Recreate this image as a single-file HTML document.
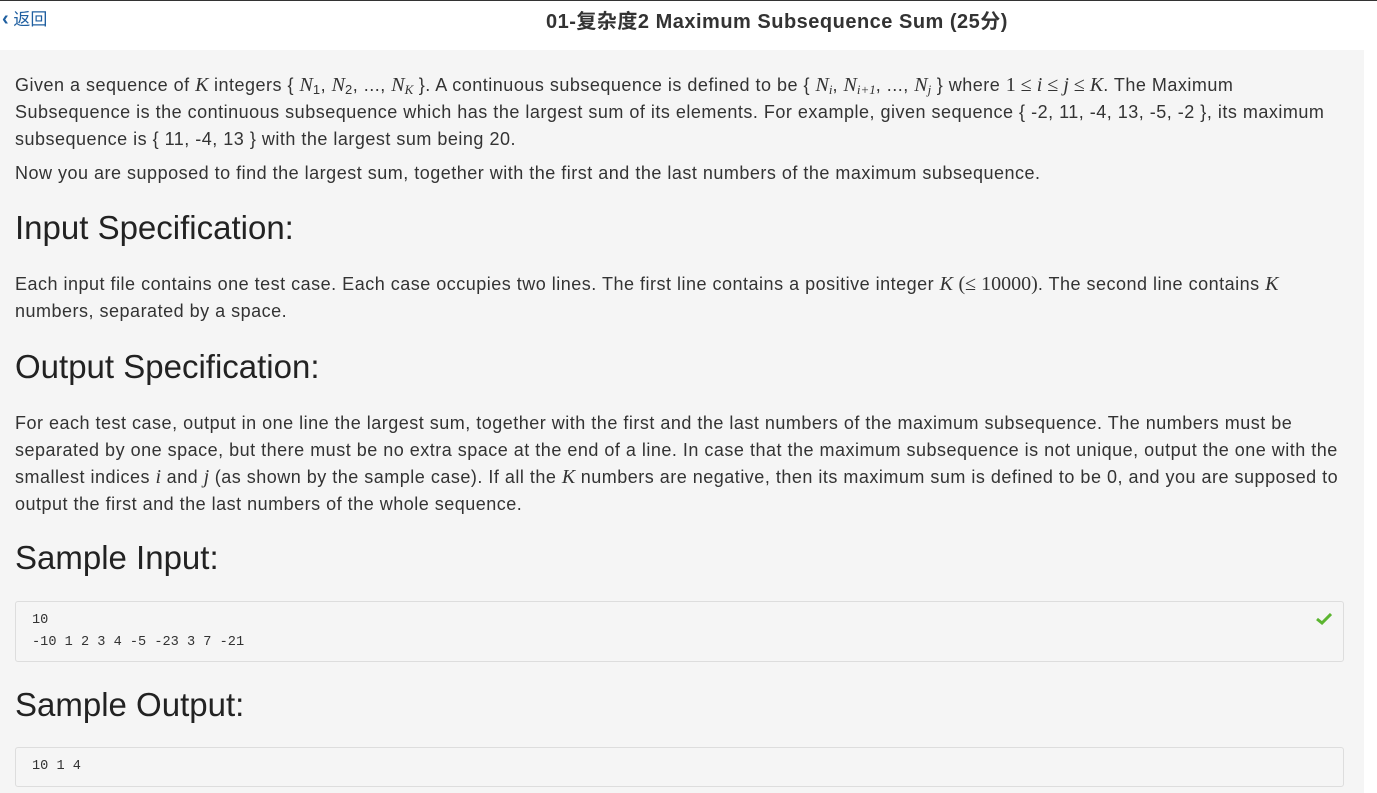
<!DOCTYPE html>
<html><head><meta charset="utf-8"><style>
html,body{margin:0;padding:0;background:#fff;width:1377px;height:793px;overflow:hidden;}
body{font-family:"Liberation Sans","Noto Sans CJK SC",sans-serif;color:#333;}
.topline{position:absolute;left:0;top:0;width:1377px;height:1px;background:#333;}
.back{position:absolute;left:2px;top:5px;font-size:17px;color:#1f5fa0;}
.back b{font-size:20px;}
.title{position:absolute;left:546px;top:5px;white-space:nowrap;font-size:20px;font-weight:bold;color:#333;letter-spacing:0.5px;}
.panel{position:absolute;left:0;top:50px;width:1364px;height:743px;background:#f5f5f5;}
.c{position:absolute;left:15px;width:1335px;font-size:18px;letter-spacing:0.5px;line-height:27px;color:#333;}
.c p{margin:0;}
.m{font-family:"Liberation Serif",serif;font-style:italic;font-size:20px;letter-spacing:0;}
.n{font-family:"Liberation Serif",serif;font-size:20px;letter-spacing:0;}
sub{font-size:13px;line-height:0;vertical-align:-3px;}
h2{position:absolute;left:15px;margin:0;font-weight:normal;font-size:33px;color:#222;}
.pre{position:absolute;left:15px;width:1329px;border:1px solid #ddd;border-radius:3px;background:#f5f5f5;font-family:"Liberation Mono","DejaVu Sans Mono",monospace;font-size:13.6px;line-height:22px;color:#333;box-sizing:border-box;padding:8px 16px;}
</style></head><body>
<div class="topline"></div>
<div class="back"><b>‹</b> 返回</div>
<div class="title">01-复杂度2 Maximum Subsequence Sum (25分)</div>
<div class="panel"></div>
<div class="c" style="top:72px">
<p>Given a sequence of <span class="m">K</span> integers { <span class="m">N</span><sub>1</sub>, <span class="m">N</span><sub>2</sub>, ..., <span class="m">N<sub>K</sub></span> }. A continuous subsequence is defined to be { <span class="m">N<sub>i</sub></span>, <span class="m">N<sub>i+1</sub></span>, ..., <span class="m">N<sub>j</sub></span> } where <span class="n">1 ≤ <i>i</i> ≤ <i>j</i> ≤ <i>K</i></span>. The Maximum Subsequence is the continuous subsequence which has the largest sum of its elements. For example, given sequence { -2, 11, -4, 13, -5, -2 }, its maximum subsequence is { 11, -4, 13 } with the largest sum being 20.</p>
</div>
<div class="c" style="top:160px"><p>Now you are supposed to find the largest sum, together with the first and the last numbers of the maximum subsequence.</p></div>
<h2 style="top:209px">Input Specification:</h2>
<div class="c" style="top:271px"><p>Each input file contains one test case. Each case occupies two lines. The first line contains a positive integer <span class="m">K</span> <span class="n">(≤ 10000)</span>. The second line contains <span class="m">K</span> numbers, separated by a space.</p></div>
<h2 style="top:348px">Output Specification:</h2>
<div class="c" style="top:410px"><p>For each test case, output in one line the largest sum, together with the first and the last numbers of the maximum subsequence. The numbers must be separated by one space, but there must be no extra space at the end of a line. In case that the maximum subsequence is not unique, output the one with the smallest indices <span class="m">i</span> and <span class="m">j</span> (as shown by the sample case). If all the <span class="m">K</span> numbers are negative, then its maximum sum is defined to be 0, and you are supposed to output the first and the last numbers of the whole sequence.</p></div>
<h2 style="top:539px">Sample Input:</h2>
<div class="pre" style="top:601px;height:61px">10<br>-10 1 2 3 4 -5 -23 3 7 -21
<svg style="position:absolute;right:11px;top:11px" width="16" height="12" viewBox="0 0 16 12"><path d="M1 6 L6 10 L15 1" stroke="#5cb531" stroke-width="3" fill="none"/></svg></div>
<h2 style="top:686px">Sample Output:</h2>
<div class="pre" style="top:747px;height:40px">10 1 4</div>
</body></html>
